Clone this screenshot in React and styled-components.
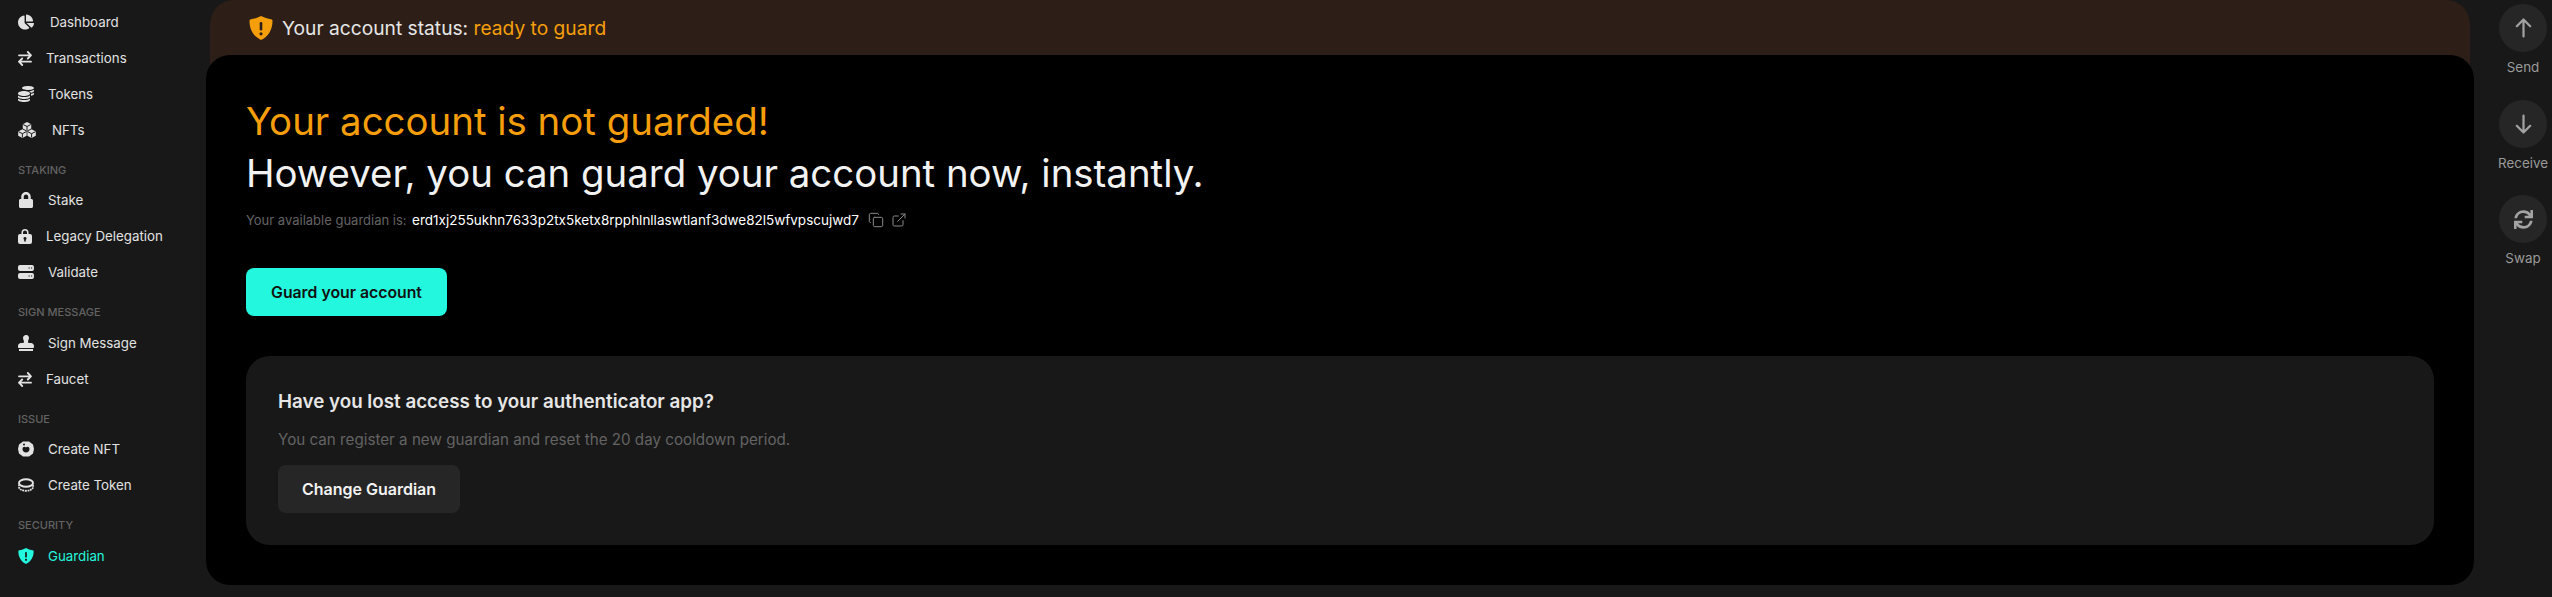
import React from "react";
import styled, { createGlobalStyle } from "styled-components";
import { FaChartPie, FaCoins, FaLock, FaStamp, FaSync } from "react-icons/fa";
import { Copy, ExternalLink } from "lucide-react";

const Global = createGlobalStyle`
  html, body { margin: 0; padding: 0; background: #181818; }
  body { font-family: Inter, "Liberation Sans", sans-serif; }
`;
const Page = styled.div`
  display: flex; width: 2552px; height: 597px; overflow: hidden; background: #181818;
`;
const Sidebar = styled.nav`
  width: 206px; flex: none; padding: 4px 0 0 18px; box-sizing: border-box;
`;
const Item = styled.div`
  display: flex; align-items: center; height: 36px; font-size: 13.3px; color: ${p => p.$active ? "#23f7dd" : "#e2e2e2"};
`;
const ItemIcon = styled.span`
  display: flex; align-items: center; font-size: 16px; margin-right: ${p => p.$gap}px;
  color: ${p => p.$active ? "#23f7dd" : "#e2e2e2"};
`;
const Section = styled.div`
  height: 20px; line-height: 20px; margin: 12px 0 ${p => p.$after}px; font-size: 11px; font-weight: 500; color: #636363;
`;
const Center = styled.main`
  width: 2268px; flex: none; display: flex; flex-direction: column;
`;
const Banner = styled.div`
  margin: 0 4px -24px; height: 79px; padding: 0 0 24px 39px; box-sizing: border-box;
  background: #2d1f18; border-radius: 24px 24px 0 0;
  display: flex; align-items: center; gap: 9px; font-size: 19.2px; color: #e6e6e6;
`;
const Warn = styled.span` color: #f59e0b; `;
const Panel = styled.section`
  position: relative; height: 530px; background: #000; border-radius: 24px;
  padding: 40px 40px 0; box-sizing: border-box;
`;
const Heading = styled.h1`
  margin: 0; font-size: 38.4px; line-height: 52px; font-weight: 400; color: ${p => p.$warn ? "#f59e0b" : "#f2f2f2"};
`;
const GuardianRow = styled.div`
  display: flex; align-items: center; margin-top: 11px; height: 20px; font-size: 13.5px; color: #fff;
`;
const Muted = styled.span` color: #636363; font-size: 13px; margin-right: 5.5px; `;
const RowIcon = styled.span` display: flex; color: #8a8a8a; margin-left: ${p => p.$gap}px; `;
const Primary = styled.button`
  display: block; margin-top: 38px; width: 201px; height: 48px; border: 0; border-radius: 8px;
  background: #23f7dd; color: #111; font: 600 15.8px Inter, sans-serif;
`;
const Card = styled.div`
  margin-top: 40px; width: 2188px; height: 189px; background: #181818; border-radius: 24px;
  padding: 34px 0 0 32px; box-sizing: border-box;
`;
const CardTitle = styled.h2` margin: 0; font-size: 18.8px; line-height: 24px; font-weight: 600; color: #e6e6e6; `;
const CardText = styled.p` margin: 16px 0 0; font-size: 15.2px; line-height: 20px; color: #636363; `;
const Secondary = styled.button`
  display: block; margin-top: 15px; width: 182px; height: 48px; border: 0; border-radius: 8px;
  background: #262626; color: #f2f2f2; font: 600 16px Inter, sans-serif;
`;
const Actions = styled.aside`
  flex: 1; display: flex; flex-direction: column; align-items: center; padding: 4px 0 0 19px;
`;
const Action = styled.div`
  display: flex; flex-direction: column; align-items: center; gap: 7px; width: 60px; height: 95.5px;
  font-size: 13.4px; line-height: 17px; color: #9a9a9a;
`;
const Circle = styled.div`
  width: 48px; height: 48px; flex: none; border-radius: 50%; background: #262626;
  display: flex; align-items: center; justify-content: center; color: #a3a3a3; font-size: 19px;
`;

const Shield = ({ size, color, mark }) => (
  <svg width={size} height={size} viewBox="0 0 24 24">
    <path fill={color} d="M12 0 C15 1.500 19 3 22 3.300 C23 3.400 23.500 4 23.500 5 C23.500 14 19 20.800 12 24 C5 20.800 .5 14 .5 5 C.5 4 1 3.400 2 3.300 C5 3 9 1.500 12 0 Z" />
    <rect x="10.700" y="6" width="2.600" height="8.500" rx="1.200" fill={mark} />
    <circle cx="12" cy="17.800" r="1.600" fill={mark} />
  </svg>
);
const SwapIcon = () => (
  <svg width="14" height="15" viewBox="0 0 14 15" fill="none" stroke="currentColor" strokeWidth="1.800" strokeLinecap="round" strokeLinejoin="round">
    <path d="M1 4.300h12M9.800 1l3.200 3.300-3.200 3.200" />
    <path d="M13 10.700H1M4.200 7.500L1 10.700 4.200 14" />
  </svg>
);
const KeyLock = () => (
  <svg width="14" height="16" viewBox="0 0 14 16">
    <path fill="currentColor" fillRule="evenodd" d="M3.500 6V4.500a3.500 3.500 0 0 1 7 0V6H12a2 2 0 0 1 2 2v6a2 2 0 0 1-2 2H2a2 2 0 0 1-2-2V8a2 2 0 0 1 2-2zM5 6h4V4.500a2 2 0 0 0-4 0zM7 9a1.500 1.500 0 0 0-.8 2.800V13.500h1.600V11.800A1.500 1.500 0 0 0 7 9z" />
  </svg>
);
const CubesIcon = () => (
  <svg width="18" height="16" viewBox="0 0 18 16">
    {[[9, 4.300], [4.400, 11.500], [13.600, 11.500]].map(([x, y]) => (
      <g key={x} transform={`translate(${x} ${y})`}>
        <path fill="currentColor" d="M0-4.300 4.200-2.100V2.200L0 4.400-4.200 2.200V-2.100Z" />
        <path fill="none" stroke="#181818" strokeWidth="1" d="M-3.800-1.800 0 .2 3.800-1.800M0 .2V4" />
      </g>
    ))}
  </svg>
);
const ServerIcon = () => (
  <svg width="16" height="14" viewBox="0 0 16 14">
    <rect width="16" height="6" y="0" rx="2" fill="currentColor" />
    <rect width="16" height="6" y="8" rx="2" fill="currentColor" />
    <path stroke="#181818" strokeWidth="1.200" d="M10.500 3h1.200M13 3h1.200M10.500 11h1.200M13 11h1.200" />
  </svg>
);
const NftIcon = () => (
  <svg width="16" height="16" viewBox="0 0 16 16">
    <path fill="currentColor" fillRule="evenodd" d="M5 .5h6L15 3.500 16 8l-1 4.500L11 15.500H5L1 12.500 0 8l1-4.500zM8 6.500C7 5 4.500 5.500 4.500 8c0 2 1.500 3.500 3.500 3.500s3.500-1.500 3.500-3.500C11.500 5.500 9 5 8 6.500z" />
    <circle cx="6" cy="3.500" r="1" fill="#181818" />
  </svg>
);
const TokenIcon = () => (
  <svg width="16" height="14" viewBox="0 0 16 14" fill="none" stroke="currentColor">
    <ellipse cx="8" cy="5" rx="7" ry="3.800" strokeWidth="2" />
    <path d="M1 6.500v2.500c0 2 3 3.800 7 3.800s7-1.800 7-3.800V6.500" strokeWidth="1.800" strokeDasharray="1.800 .7" />
  </svg>
);
const Arrow = ({ down }) => (
  <svg width="17" height="20" viewBox="0 0 17 20" fill="none" stroke="currentColor" strokeWidth="2.200" strokeLinecap="round" strokeLinejoin="round">
    {down
      ? <path d="M8.500 1.500v17M1.800 11.800l6.700 6.700 6.700-6.700" />
      : <path d="M8.500 18.500v-17M1.800 8.200l6.700-6.700 6.700 6.700" />}
  </svg>
);

const groups = [
  [null, 0, [["Dashboard", FaChartPie, 16], ["Transactions", SwapIcon, 14], ["Tokens", FaCoins, 14], ["NFTs", CubesIcon, 16]]],
  ["STAKING", 2, [["Stake", FaLock, 14], ["Legacy Delegation", KeyLock, 14], ["Validate", ServerIcon, 14]]],
  ["SIGN MESSAGE", 3, [["Sign Message", FaStamp, 14], ["Faucet", SwapIcon, 14]]],
  ["ISSUE", 2, [["Create NFT", NftIcon, 14], ["Create Token", TokenIcon, 14]]],
];

export default function App() {
  return (
    <Page>
      <Global />
      <Sidebar>
        {groups.map(([title, after, items], i) => (
          <React.Fragment key={i}>
            {title && <Section $after={after}>{title}</Section>}
            {items.map(([label, Icon, gap]) => (
              <Item key={label}>
                <ItemIcon $gap={gap}><Icon /></ItemIcon>{label}
              </Item>
            ))}
          </React.Fragment>
        ))}
        <Section $after={3}>SECURITY</Section>
        <Item $active><ItemIcon $active $gap={14}><Shield size={16} color="#23f7dd" mark="#181818" /></ItemIcon>Guardian</Item>
      </Sidebar>
      <Center>
        <Banner>
          <Shield size={24} color="#f59e0b" mark="#2d1f18" />
          <span>Your account status: <Warn>ready to guard</Warn></span>
        </Banner>
        <Panel>
          <Heading $warn>Your account is not guarded!</Heading>
          <Heading>However, you can guard your account now, instantly.</Heading>
          <GuardianRow>
            <Muted>Your available guardian is:</Muted>
            erd1xj255ukhn7633p2tx5ketx8rpphlnllaswtlanf3dwe82l5wfvpscujwd7
            <RowIcon $gap={9}><Copy size={16} strokeWidth={1.5} /></RowIcon>
            <RowIcon $gap={7}><ExternalLink size={16} strokeWidth={1.5} /></RowIcon>
          </GuardianRow>
          <Primary>Guard your account</Primary>
          <Card>
            <CardTitle>Have you lost access to your authenticator app?</CardTitle>
            <CardText>You can register a new guardian and reset the 20 day cooldown period.</CardText>
            <Secondary>Change Guardian</Secondary>
          </Card>
        </Panel>
      </Center>
      <Actions>
        <Action><Circle><Arrow /></Circle>Send</Action>
        <Action><Circle><Arrow down /></Circle>Receive</Action>
        <Action><Circle><FaSync /></Circle>Swap</Action>
      </Actions>
    </Page>
  );
}
